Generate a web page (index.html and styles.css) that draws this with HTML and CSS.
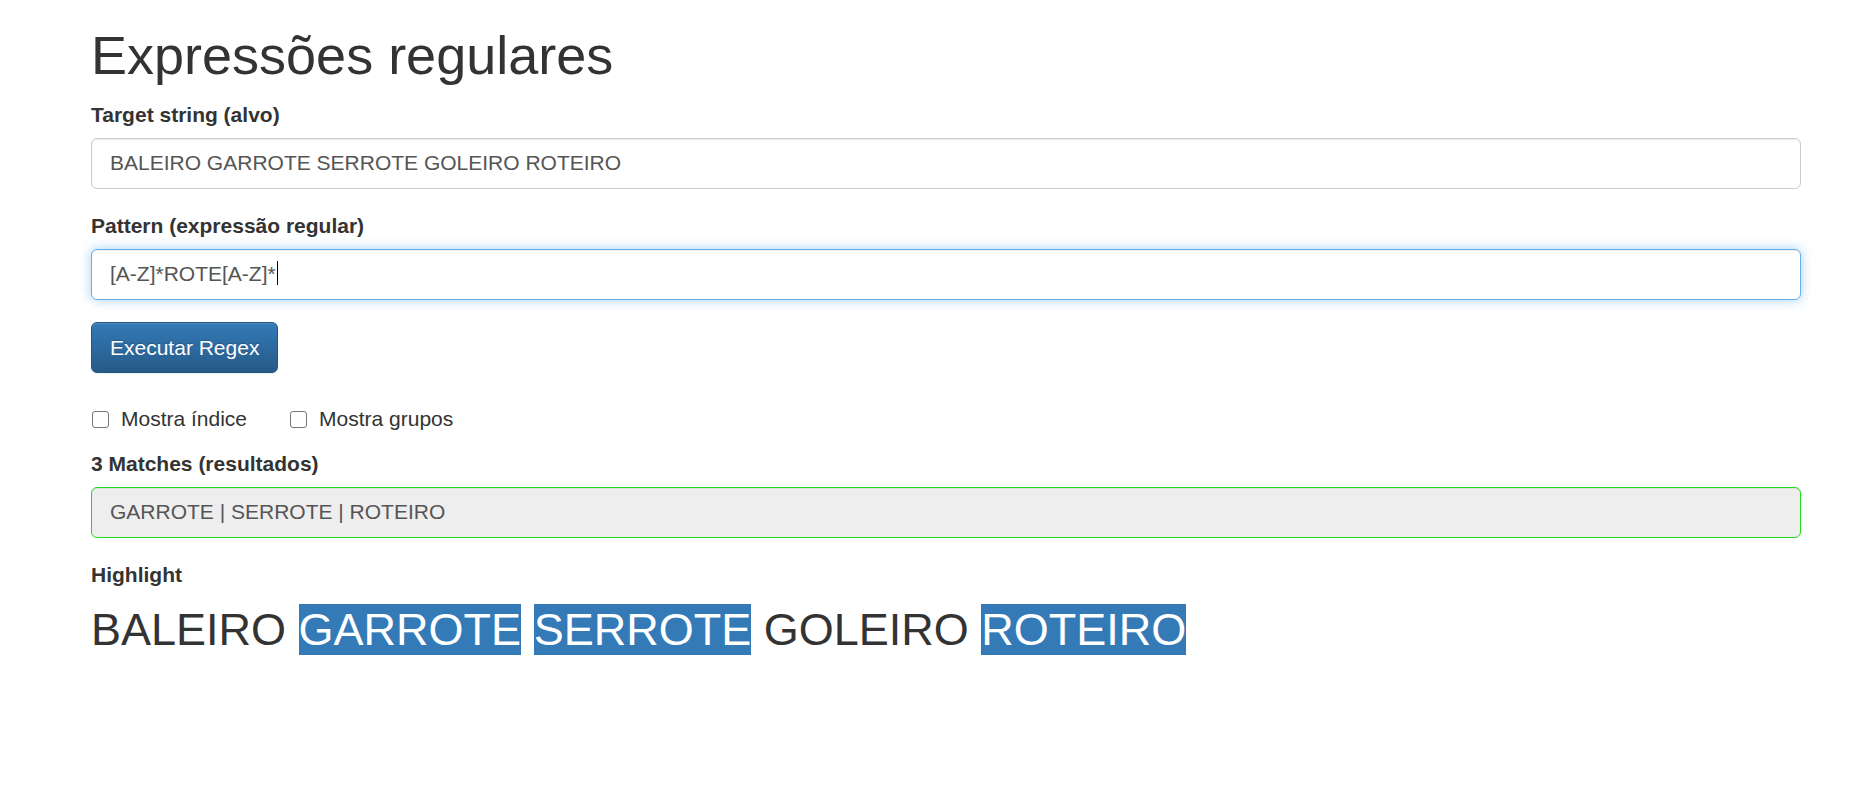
FILE: index.html
```html
<!DOCTYPE html>
<html lang="pt-BR">
<head>
<meta charset="utf-8">
<title>Expressões regulares</title>
<link rel="stylesheet" href="styles.css">
</head>
<body>
<main class="page">
  <h1 class="title">Expressões regulares</h1>

  <div class="form-group">
    <label class="label" for="target">Target string (alvo)</label>
    <input class="form-control" id="target" type="text" value="BALEIRO GARROTE SERROTE GOLEIRO ROTEIRO">
  </div>

  <div class="form-group">
    <label class="label">Pattern (expressão regular)</label>
    <div class="form-control focused" role="textbox">[A-Z]*ROTE[A-Z]*<span class="caret"></span></div>
  </div>

  <div class="form-group">
    <button class="btn btn-primary" type="button">Executar Regex</button>
  </div>

  <div class="checks">
    <label class="check"><input type="checkbox" class="box"> Mostra índice</label>
    <label class="check"><input type="checkbox" class="box"> Mostra grupos</label>
  </div>

  <div class="form-group">
    <label class="label" for="result">3 Matches (resultados)</label>
    <input class="form-control result" id="result" type="text" readonly value="GARROTE | SERROTE | ROTEIRO">
  </div>

  <div class="form-group">
    <label class="label">Highlight</label>
    <div class="highlight">BALEIRO <span class="hl">GARROTE</span> <span class="hl">SERROTE</span> GOLEIRO <span class="hl">ROTEIRO</span></div>
  </div>
</main>
</body>
</html>
```
FILE: styles.css
```css
* { box-sizing: border-box; }
html, body { margin: 0; padding: 0; background: #fff; }
body {
  font-family: "Liberation Sans", Arial, Helvetica, sans-serif;
  font-size: 21px;
  line-height: 1.42857;
  color: #333;
}
.page {
  padding: 0 54px 0 91px;
}
.title {
  font-size: 54px;
  font-weight: 500;
  line-height: 1.1;
  margin: 26px 0 15px;
}
.form-group {
  margin-bottom: 22.5px;
}
.label {
  display: inline-block;
  font-weight: bold;
  margin-bottom: 7.5px;
}
.form-control {
  display: block;
  width: 100%;
  height: 51px;
  padding: 9px 18px;
  font-family: inherit;
  font-size: 21px;
  line-height: 1.42857;
  color: #555;
  background: #fff;
  border: 1px solid #ccc;
  border-radius: 6px;
  box-shadow: inset 0 1px 1px rgba(0,0,0,.075);
  margin: 0;
}
.focused {
  border-color: #66afe9;
  outline: 0;
  box-shadow: inset 0 1px 1px rgba(0,0,0,.075), 0 0 12px rgba(102,175,233,.6);
}
.caret {
  display: inline-block;
  width: 1px;
  height: 24px;
  background: #000;
  vertical-align: -4px;
  margin-left: 1px;
}
.result {
  background: #eee;
  border-color: #1fdc1f;
}
.btn {
  display: inline-block;
  height: 51px;
  padding: 9px 18px;
  font-family: inherit;
  font-size: 21px;
  line-height: 1.42857;
  border: 1px solid #245580;
  border-radius: 6px;
  cursor: pointer;
}
.btn-primary {
  color: #fff;
  background-image: linear-gradient(to bottom, #337ab7 0, #265a88 100%);
  text-shadow: 0 -1px 0 rgba(0,0,0,.2);
  box-shadow: inset 0 1px 0 rgba(255,255,255,.15), 0 1px 1px rgba(0,0,0,.075);
}
.checks {
  display: flex;
  gap: 42px;
  margin-top: 31px;
  margin-bottom: 15px;
  height: 30px;
  align-items: center;
}
.check {
  display: flex;
  align-items: center;
  gap: 12px;
  font-weight: normal;
  color: #333;
}
.box {
  appearance: none;
  -webkit-appearance: none;
  width: 17px;
  height: 17px;
  margin: 0 0 0 1px;
  border: 1.5px solid #767676;
  border-radius: 3px;
  background: #fff;
}
.highlight {
  font-size: 45px;
  line-height: 1.42857;
  color: #333;
}
.hl {
  background: #337ab7;
  color: #fff;
}
```
